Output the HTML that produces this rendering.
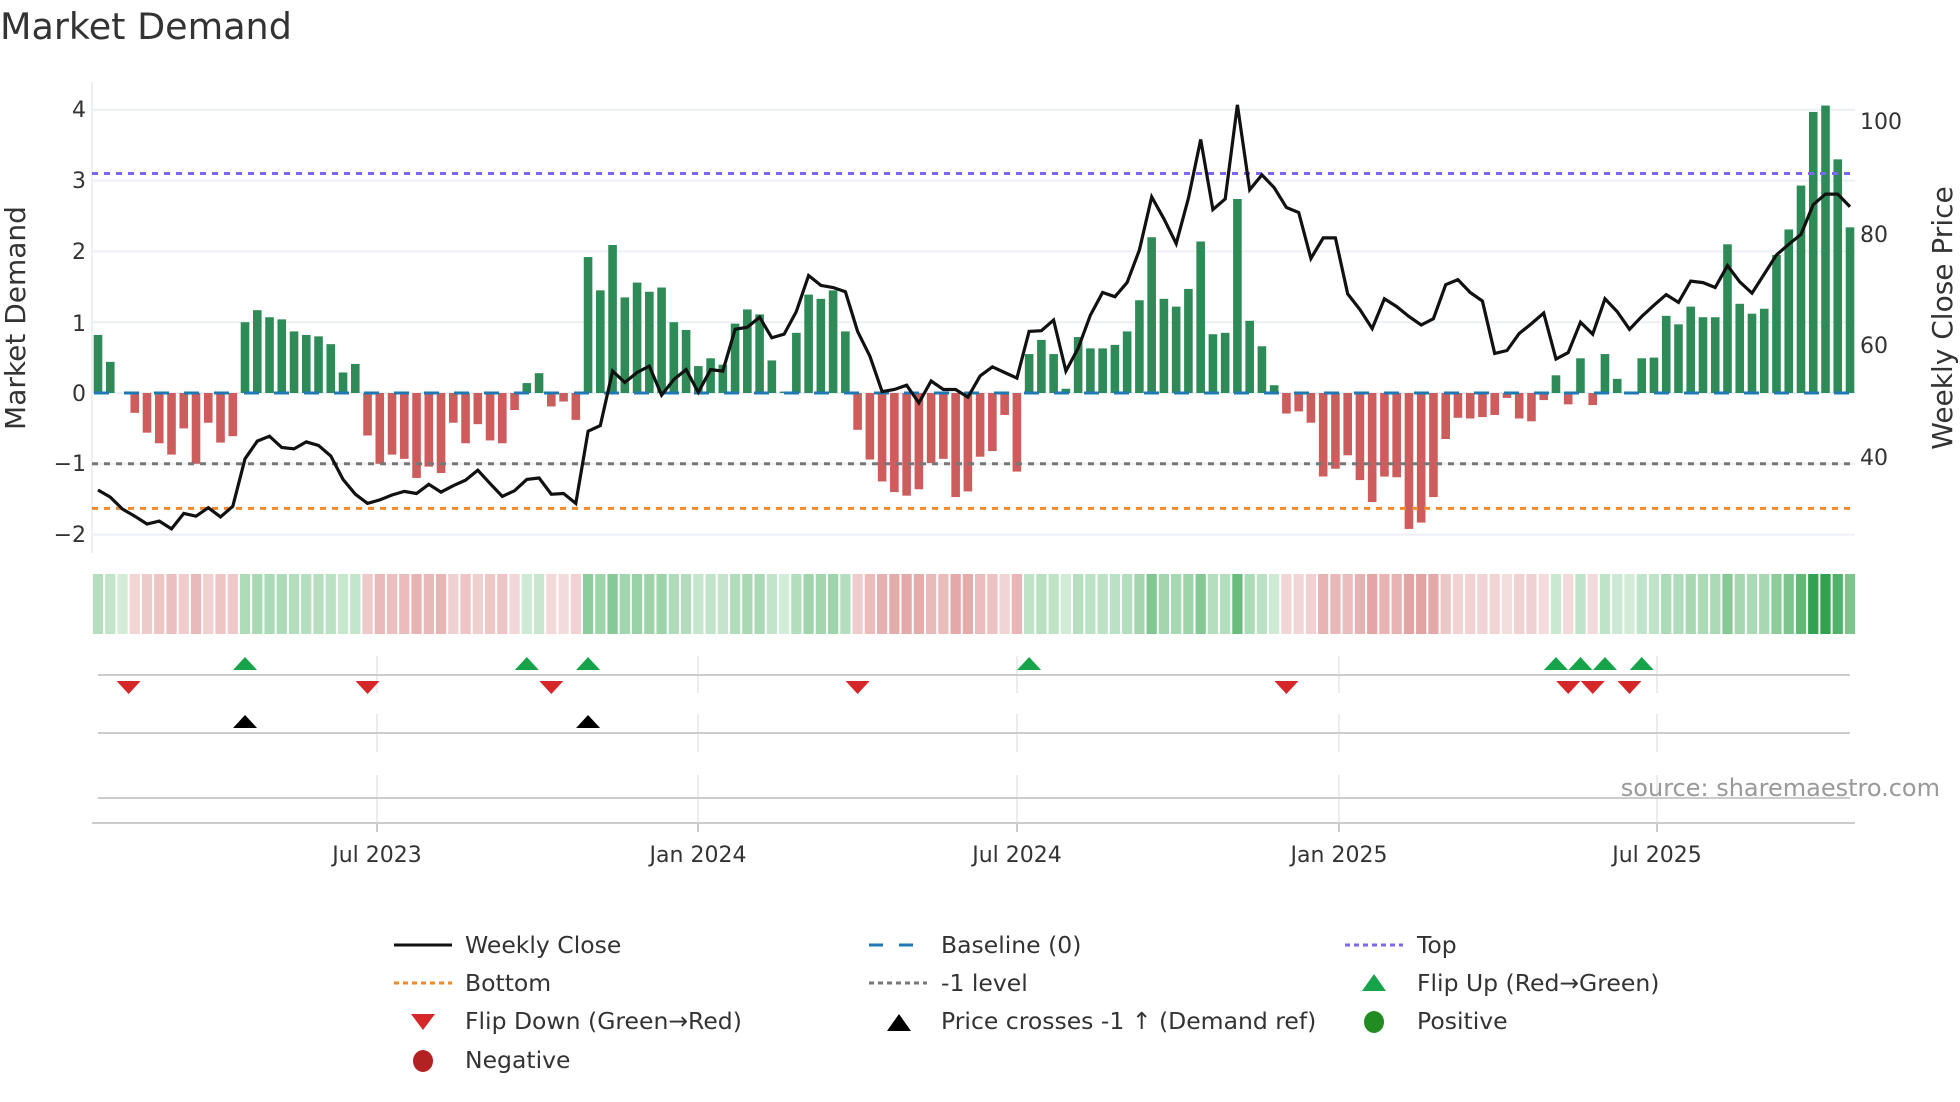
<!DOCTYPE html>
<html><head><meta charset="utf-8"><style>
html,body{margin:0;padding:0;background:#fff;}
svg{display:block;font-family:"DejaVu Sans","Liberation Sans",sans-serif;}
</style></head><body>
<svg id="s" width="1960" height="1102" viewBox="0 0 1960 1102" xmlns="http://www.w3.org/2000/svg">
<rect width="1960" height="1102" fill="#fff"/>
<text x="0" y="39" font-size="36.5" fill="#333">Market Demand</text>
<g id="grid"></g>
<g id="bars"></g>
<g id="heat"></g>
<g id="lower"></g>
<g font-size="22" fill="#333" text-anchor="end">
<text x="86" y="117">4</text>
<text x="86" y="188">3</text>
<text x="86" y="259">2</text>
<text x="86" y="331">1</text>
<text x="86" y="401">0</text>
<text x="86" y="471">−1</text>
<text x="86" y="542">−2</text>
</g>
<g font-size="22" fill="#333">
<text x="1860" y="129">100</text>
<text x="1860" y="242">80</text>
<text x="1860" y="353">60</text>
<text x="1860" y="465">40</text>
</g>
<text transform="translate(25,318) rotate(-90)" font-size="28" fill="#333" text-anchor="middle">Market Demand</text>
<text transform="translate(1952,318) rotate(-90)" font-size="28" fill="#333" text-anchor="middle">Weekly Close Price</text>
<g font-size="22" fill="#333" text-anchor="middle">
<text x="377" y="862">Jul 2023</text>
<text x="698" y="862">Jan 2024</text>
<text x="1017" y="862">Jul 2024</text>
<text x="1339" y="862">Jan 2025</text>
<text x="1657" y="862">Jul 2025</text>
</g>
<text x="1940" y="796" font-size="24" fill="#999" text-anchor="end">source: sharemaestro.com</text>
<g font-size="23.5" fill="#333">
<line x1="394" y1="945" x2="452" y2="945" stroke="#111" stroke-width="3"/>
<text x="465" y="953">Weekly Close</text>
<line x1="394" y1="983" x2="452" y2="983" stroke="#ef8a2e" stroke-width="3" stroke-dasharray="5 4"/>
<text x="465" y="991">Bottom</text>
<polygon points="411,1014 435,1014 423,1030" fill="#d62728"/>
<text x="465" y="1029">Flip Down (Green→Red)</text>
<ellipse cx="423" cy="1061" rx="10" ry="11" fill="#b22222"/>
<text x="465" y="1068">Negative</text>

<line x1="869" y1="945" x2="927" y2="945" stroke="#1f77b4" stroke-width="3" stroke-dasharray="14 16"/>
<text x="941" y="953">Baseline (0)</text>
<line x1="869" y1="983" x2="927" y2="983" stroke="#777" stroke-width="3" stroke-dasharray="5 4"/>
<text x="941" y="991">-1 level</text>
<polygon points="887,1031 911,1031 899,1014" fill="#000"/>
<text x="941" y="1029">Price crosses -1 ↑ (Demand ref)</text>

<line x1="1345" y1="945" x2="1403" y2="945" stroke="#7b68ee" stroke-width="3" stroke-dasharray="5 4"/>
<text x="1417" y="953">Top</text>
<polygon points="1362,991 1386,991 1374,974" fill="#16a34a"/>
<text x="1417" y="991">Flip Up (Red→Green)</text>
<ellipse cx="1374" cy="1022" rx="10" ry="11" fill="#228b22"/>
<text x="1417" y="1029">Positive</text>
</g>
</svg>
<script>
(function(){
var NS="http://www.w3.org/2000/svg";
function el(p,t,a){var e=document.createElementNS(NS,t);for(var k in a)e.setAttribute(k,a[k]);p.appendChild(e);return e;}
var v=[0.82,0.44,0,-0.28,-0.56,-0.71,-0.87,-0.5,-1.0,-0.42,-0.7,-0.61,1.0,1.17,1.07,1.04,0.87,0.82,0.8,0.69,0.29,0.41,-0.6,-1.0,-0.87,-0.93,-1.2,-1.04,-1.13,-0.42,-0.71,-0.44,-0.67,-0.71,-0.24,0.14,0.28,-0.19,-0.12,-0.38,
1.92,1.45,2.09,1.35,1.56,1.43,1.49,1.0,0.89,0.38,0.49,0.4,0.98,1.18,1.11,0.46,0.02,0.85,1.39,1.33,1.45,0.87,-0.52,-0.94,-1.25,-1.4,-1.45,-1.36,-0.99,-0.93,-1.47,-1.39,-0.9,-0.82,-0.31,-1.11,
0.55,0.75,0.55,0.06,0.79,0.63,0.63,0.68,0.87,1.31,2.2,1.33,1.22,1.47,2.14,0.83,0.85,2.74,1.02,0.66,0.11,
-0.29,-0.26,-0.42,-1.18,-1.07,-0.88,-1.23,-1.54,-1.18,-1.19,-1.92,-1.83,-1.47,-0.65,-0.35,-0.36,-0.34,-0.31,-0.07,-0.36,-0.4,-0.1,
0.25,-0.16,0.49,-0.17,0.55,0.2,0,0.49,0.5,1.09,0.97,1.22,1.07,1.07,2.1,1.26,1.12,1.19,1.95,2.31,2.93,3.97,4.06,3.3,2.34];
var p=[-1.37,-1.47,-1.64,-1.74,-1.85,-1.81,-1.92,-1.7,-1.74,-1.62,-1.75,-1.6,-0.93,-0.68,-0.61,-0.77,-0.79,-0.69,-0.74,-0.89,-1.22,-1.43,-1.56,-1.51,-1.44,-1.39,-1.42,-1.29,-1.4,-1.31,-1.23,-1.09,-1.28,-1.46,-1.38,-1.22,-1.2,-1.43,-1.42,-1.56,
-0.54,-0.46,0.31,0.15,0.29,0.38,-0.03,0.19,0.33,0.01,0.33,0.31,0.9,0.93,1.07,0.78,0.83,1.15,1.66,1.52,1.49,1.43,0.87,0.52,0.02,0.05,0.11,-0.14,0.17,0.05,0.05,-0.06,0.24,0.37,0.29,0.21,0.87,0.88,1.03,0.31,0.63,1.1,1.42,1.36,1.56,2.02,
2.77,2.46,2.11,2.75,3.58,2.59,2.74,4.07,2.87,3.08,2.9,2.62,2.55,1.9,2.19,2.19,1.4,1.18,0.91,1.33,1.22,1.08,0.96,1.05,1.53,1.6,1.42,1.3,0.56,0.6,0.84,0.98,1.13,0.48,0.57,1.0,0.83,1.33,1.15,0.9,1.08,1.24,1.39,1.28,1.58,1.56,1.49,1.8,1.57,1.41,1.68,1.95,2.1,2.24,2.66,2.81,2.81,2.63];
var N=v.length,x0=98,pitch=(1850-98)/(N-1),Y0=393,U=70.8;
function X(i){return x0+i*pitch;}
function Y(d){return Y0-d*U;}
var g=document.getElementById('grid');
[4,3,2,1,0,-1,-2].forEach(function(d){el(g,'line',{x1:92,x2:1855,y1:Y(d),y2:Y(d),stroke:'#eceff4','stroke-width':2});});
el(g,'line',{x1:92,x2:92,y1:82,y2:553,stroke:'#eceff4','stroke-width':2});
var b=document.getElementById('bars');
for(var i=0;i<N;i++){var d=v[i];if(d===0)continue;var y1=Y(Math.max(d,0)),y2=Y(Math.min(d,0));
el(b,'rect',{x:X(i)-4.3,y:y1,width:8.6,height:Math.max(y2-y1,1),fill:d>0?'#2e8b57':'#cd5c5c'});}
el(b,'line',{x1:92,x2:1855,y1:Y(3.1),y2:Y(3.1),stroke:'#7b68ee','stroke-width':3,'stroke-dasharray':'6 6'});
el(b,'line',{x1:92,x2:1855,y1:Y(-1),y2:Y(-1),stroke:'#777','stroke-width':3,'stroke-dasharray':'6 6'});
el(b,'line',{x1:92,x2:1855,y1:Y(-1.63),y2:Y(-1.63),stroke:'#ef8a2e','stroke-width':3,'stroke-dasharray':'6 6'});
el(b,'line',{x1:94,x2:1855,y1:Y(0),y2:Y(0),stroke:'#1f77b4','stroke-width':3,'stroke-dasharray':'15 15'});
var pts=[];for(i=0;i<p.length;i++)pts.push(X(i).toFixed(1)+','+Y(p[i]).toFixed(1));
el(b,'polyline',{points:pts.join(' '),fill:'none',stroke:'#111','stroke-width':3.2,'stroke-linejoin':'miter'});
function mix(a,c,t){t=Math.max(0,Math.min(1,t));var r=[];for(var k=0;k<3;k++)r.push(Math.round(a[k]+(c[k]-a[k])*t));return 'rgb('+r.join(',')+')';}
var h=document.getElementById('heat');
for(i=0;i<N;i++){var d=v[i],c;
if(d>=0){c=d<2?mix([210,236,216],[138,203,153],d/2):mix([138,203,153],[46,160,76],(d-2)/2.1);}
else{c=mix([245,224,224],[226,163,163],-d/1.6);}
el(h,'rect',{x:X(i)-pitch/2+1,y:574,width:pitch-2,height:60,fill:c});}
var L=document.getElementById('lower');
[377,698,1017,1339,1657].forEach(function(x){
el(L,'line',{x1:x,x2:x,y1:656,y2:693,stroke:'#e6e6e6','stroke-width':1.5});
el(L,'line',{x1:x,x2:x,y1:714,y2:752,stroke:'#e6e6e6','stroke-width':1.5});
el(L,'line',{x1:x,x2:x,y1:775,y2:823,stroke:'#e6e6e6','stroke-width':1.5});
el(L,'line',{x1:x,x2:x,y1:823,y2:832,stroke:'#bbb','stroke-width':1.5});});
[675,733,798].forEach(function(y){el(L,'line',{x1:98,x2:1850,y1:y,y2:y,stroke:'#ccc','stroke-width':2});});
el(L,'line',{x1:92,x2:1855,y1:823,y2:823,stroke:'#ccc','stroke-width':2});
function tri(x,yt,yb,up,col){var w=12;el(L,'polygon',{points:up?(x-w)+','+yb+' '+(x+w)+','+yb+' '+x+','+yt:(x-w)+','+yt+' '+(x+w)+','+yt+' '+x+','+yb,fill:col});}
[12,35,40,76,119,121,123,126].forEach(function(i){tri(X(i),657,670,true,'#16a34a');});
[2.5,22,37,62,97,120,122,125].forEach(function(i){tri(X(i),681,694,false,'#d62728');});
[12,40].forEach(function(i){tri(X(i),715,728,true,'#000');});
})();
</script>
</body></html>
